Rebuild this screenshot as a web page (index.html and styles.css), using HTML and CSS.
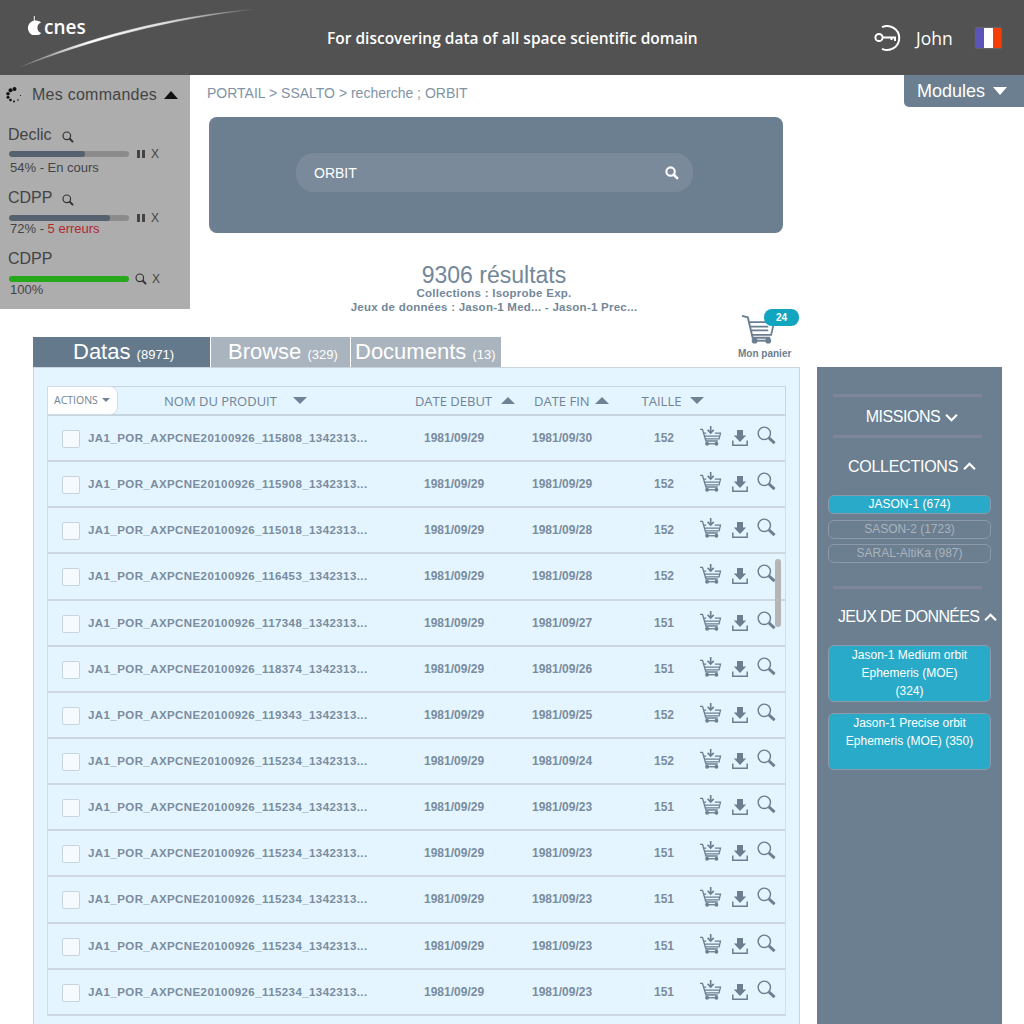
FILE: index.html
```html
<!DOCTYPE html>
<html lang="fr">
<head>
<meta charset="utf-8">
<title>CNES - Recherche ORBIT</title>
<link rel="stylesheet" href="styles.css">
</head>
<body>
<svg class="defs" width="0" height="0" aria-hidden="true">
  <symbol id="i-cart" viewBox="0 0 24 22">
    <path d="M1 3.500h2.600l3.600 12.200h12.400" fill="none" stroke="currentColor" stroke-width="1.400"/>
    <path d="M5 7.500h2.500M16.500 7.500h6L21 13.500H6.800M6 10.500h15" fill="none" stroke="currentColor" stroke-width="1.300"/>
    <path d="M12.200 0v6.500M9 4l3.200 3.300L15.400 4" fill="none" stroke="currentColor" stroke-width="1.700"/>
    <circle cx="8.400" cy="18.600" r="2"/><circle cx="18.200" cy="18.600" r="2"/>
    <path d="M8.400 18.600h9.800" stroke="currentColor" stroke-width="1.400"/>
  </symbol>
  <symbol id="i-dl" viewBox="0 0 16 16">
    <path d="M5 0h6v5.500h3.200L8 12 1.800 5.500H5z"/>
    <path d="M.8 10.500v4.700h14.400v-4.700" fill="none" stroke="currentColor" stroke-width="1.500"/>
  </symbol>
  <symbol id="i-search" viewBox="0 0 20 20">
    <circle cx="7.700" cy="7.700" r="6.500" fill="none" stroke="currentColor" stroke-width="1.500"/>
    <path d="M12.500 12.500l6 5.500" fill="none" stroke="currentColor" stroke-width="3"/>
  </symbol>
  <symbol id="i-search-mid" viewBox="0 0 20 20">
    <circle cx="8" cy="8" r="6.300" fill="none" stroke="currentColor" stroke-width="2"/>
    <path d="M12.500 12.500l6 6" fill="none" stroke="currentColor" stroke-width="3.200"/>
  </symbol>
  <symbol id="i-search-bold" viewBox="0 0 20 20">
    <circle cx="8" cy="8" r="6" fill="none" stroke="currentColor" stroke-width="3"/>
    <path d="M12.500 12.500l6 6" fill="none" stroke="currentColor" stroke-width="3.600"/>
  </symbol>
  <symbol id="i-pause" viewBox="0 0 8 8"><path d="M0 0h3v8H0zM5 0h3v8H5z"/></symbol>
</svg>

<header class="topbar">
  <div class="brand">
    <svg class="brand-mark" viewBox="0 0 18 20" aria-hidden="true">
      <path d="M7.200 0h1v6h-1z"/>
      <path d="M11 5A8 8 0 1 0 15 18 6.500 6.500 0 0 1 11 12 6 6 0 0 1 15 6.800 8 8 0 0 0 11 5z"/>
    </svg>
    <span class="brand-name">cnes</span>
  </div>
  <svg class="swoosh" viewBox="0 0 240 60" aria-hidden="true">
    <defs>
      <linearGradient id="sw" x1="0" x2="1" y1="0" y2="0">
        <stop offset="0" stop-color="#fff" stop-opacity="0"/>
        <stop offset=".3" stop-color="#fff"/>
        <stop offset=".6" stop-color="#fff" stop-opacity=".8"/>
        <stop offset="1" stop-color="#fff" stop-opacity="0"/>
      </linearGradient>
    </defs>
    <path d="M0 59C70 28 150 8 238 0 150 10 72 31 0 59z" fill="url(#sw)" stroke="url(#sw)" stroke-width=".6"/>
  </svg>
  <p class="tagline">For discovering data of all space scientific domain</p>
  <div class="user">
    <svg class="key" viewBox="0 0 28 28" aria-hidden="true">
      <path d="M8 3.200A12 12 0 1 1 8 24.800" fill="none" stroke="#fff" stroke-width="2"/>
      <circle cx="5" cy="13.500" r="3.600" fill="none" stroke="#fff" stroke-width="2"/>
      <path d="M8.500 13.500h12.500v3.500M17.500 13.500v2.500" fill="none" stroke="#fff" stroke-width="2"/>
    </svg>
    <span class="user-name">John</span>
    <span class="flag"><i class="flag-b"></i><i class="flag-w"></i><i class="flag-r"></i></span>
  </div>
</header>

<div class="upper">
  <aside class="orders">
    <div class="orders-head">
      <svg class="spinner" viewBox="0 0 16 16" aria-hidden="true">
        <circle cx="8.500" cy="2" r="2"/><circle cx="4.500" cy="3.200" r="2"/><circle cx="2" cy="6.800" r="1.800"/>
        <circle cx="2" cy="10.300" r="1.500"/><circle cx="4.500" cy="13" r="1.300"/><circle cx="8" cy="14.600" r="1"/>
        <circle cx="12" cy="13" r=".8"/><circle cx="14.500" cy="8.500" r=".6"/>
      </svg>
      <span class="orders-title">Mes commandes</span>
      <i class="tri tri-up tri-dark"></i>
    </div>
    <div class="order order-a">
      <div class="order-name">Declic <svg class="mini"><use href="#i-search-mid"/></svg></div>
      <div class="order-bar">
        <div class="bar"><div class="fill" style="width:63%"></div></div>
        <svg class="pause"><use href="#i-pause"/></svg><span class="x">X</span>
      </div>
      <div class="order-status">54% - En cours</div>
    </div>
    <div class="order order-b">
      <div class="order-name">CDPP <svg class="mini"><use href="#i-search-mid"/></svg></div>
      <div class="order-bar">
        <div class="bar"><div class="fill" style="width:84%"></div></div>
        <svg class="pause"><use href="#i-pause"/></svg><span class="x">X</span>
      </div>
      <div class="order-status">72% - <span class="err">5 erreurs</span></div>
    </div>
    <div class="order order-c">
      <div class="order-name">CDPP</div>
      <div class="order-bar">
        <div class="bar"><div class="fill fill-ok" style="width:100%"></div></div>
        <svg class="mini mini-bar"><use href="#i-search-mid"/></svg><span class="x">X</span>
      </div>
      <div class="order-status">100%</div>
    </div>
  </aside>

  <main class="intro">
    <div class="crumbs-row">
      <div class="crumbs">PORTAIL &gt; SSALTO &gt; recherche ; ORBIT</div>
      <button class="modules">Modules <i class="tri tri-down tri-white"></i></button>
    </div>
    <section class="search-card">
      <div class="search-box">
        <span>ORBIT</span>
        <svg class="search-icon"><use href="#i-search-bold"/></svg>
      </div>
    </section>
    <section class="results">
      <h1>9306 résultats</h1>
      <p>Collections : Isoprobe Exp.</p>
      <p>Jeux de données : Jason-1 Med... - Jason-1 Prec...</p>
      <div class="basket">
        <svg class="basket-icon" viewBox="0 0 36 32" aria-hidden="true">
          <path d="M1 1.500l6 1.500 5 21h18" fill="none" stroke="currentColor" stroke-width="2"/>
          <path d="M8 8h26l-3 13H11M10 12.500h18M11 16.500h17" fill="none" stroke="currentColor" stroke-width="1.800"/>
          <circle cx="14" cy="27" r="3"/><circle cx="28" cy="27" r="3"/><path d="M14 27h14" stroke="currentColor" stroke-width="2"/>
        </svg>
        <span class="basket-count">24</span>
        <span class="basket-label">Mon panier</span>
      </div>
    </section>
  </main>
</div>

<div class="lower">
  <section class="data">
    <nav class="tabs">
      <a class="tab tab-on">Datas <small>(8971)</small></a>
      <a class="tab tab-browse">Browse <small>(329)</small></a>
      <a class="tab tab-docs">Documents <small>(13)</small></a>
    </nav>
    <div class="panel">
      <div class="table">
        <div class="thead">
          <button class="actions">ACTIONS <i class="tri tri-down tri-small"></i></button>
          <span class="th th-name">NOM DU PRODUIT <i class="tri tri-down tri-col"></i></span>
          <span class="th th-start">DATE DEBUT <i class="tri tri-up tri-col"></i></span>
          <span class="th th-end">DATE FIN <i class="tri tri-up tri-col"></i></span>
          <span class="th th-size">TAILLE <i class="tri tri-down tri-col"></i></span>
        </div>
        <div class="row"><i class="check"></i><span class="name">JA1_POR_AXPCNE20100926_115808_1342313...</span><span class="date">1981/09/29</span><span class="date">1981/09/30</span><span class="size">152</span><span class="tools"><svg class="t-cart"><use href="#i-cart"/></svg><svg class="t-dl"><use href="#i-dl"/></svg><svg class="t-s"><use href="#i-search"/></svg></span></div>
        <div class="row"><i class="check"></i><span class="name">JA1_POR_AXPCNE20100926_115908_1342313...</span><span class="date">1981/09/29</span><span class="date">1981/09/29</span><span class="size">152</span><span class="tools"><svg class="t-cart"><use href="#i-cart"/></svg><svg class="t-dl"><use href="#i-dl"/></svg><svg class="t-s"><use href="#i-search"/></svg></span></div>
        <div class="row"><i class="check"></i><span class="name">JA1_POR_AXPCNE20100926_115018_1342313...</span><span class="date">1981/09/29</span><span class="date">1981/09/28</span><span class="size">152</span><span class="tools"><svg class="t-cart"><use href="#i-cart"/></svg><svg class="t-dl"><use href="#i-dl"/></svg><svg class="t-s"><use href="#i-search"/></svg></span></div>
        <div class="row"><i class="check"></i><span class="name">JA1_POR_AXPCNE20100926_116453_1342313...</span><span class="date">1981/09/29</span><span class="date">1981/09/28</span><span class="size">152</span><span class="tools"><svg class="t-cart"><use href="#i-cart"/></svg><svg class="t-dl"><use href="#i-dl"/></svg><svg class="t-s"><use href="#i-search"/></svg></span></div>
        <div class="row"><i class="check"></i><span class="name">JA1_POR_AXPCNE20100926_117348_1342313...</span><span class="date">1981/09/29</span><span class="date">1981/09/27</span><span class="size">151</span><span class="tools"><svg class="t-cart"><use href="#i-cart"/></svg><svg class="t-dl"><use href="#i-dl"/></svg><svg class="t-s"><use href="#i-search"/></svg></span></div>
        <div class="row"><i class="check"></i><span class="name">JA1_POR_AXPCNE20100926_118374_1342313...</span><span class="date">1981/09/29</span><span class="date">1981/09/26</span><span class="size">151</span><span class="tools"><svg class="t-cart"><use href="#i-cart"/></svg><svg class="t-dl"><use href="#i-dl"/></svg><svg class="t-s"><use href="#i-search"/></svg></span></div>
        <div class="row"><i class="check"></i><span class="name">JA1_POR_AXPCNE20100926_119343_1342313...</span><span class="date">1981/09/29</span><span class="date">1981/09/25</span><span class="size">152</span><span class="tools"><svg class="t-cart"><use href="#i-cart"/></svg><svg class="t-dl"><use href="#i-dl"/></svg><svg class="t-s"><use href="#i-search"/></svg></span></div>
        <div class="row"><i class="check"></i><span class="name">JA1_POR_AXPCNE20100926_115234_1342313...</span><span class="date">1981/09/29</span><span class="date">1981/09/24</span><span class="size">152</span><span class="tools"><svg class="t-cart"><use href="#i-cart"/></svg><svg class="t-dl"><use href="#i-dl"/></svg><svg class="t-s"><use href="#i-search"/></svg></span></div>
        <div class="row"><i class="check"></i><span class="name">JA1_POR_AXPCNE20100926_115234_1342313...</span><span class="date">1981/09/29</span><span class="date">1981/09/23</span><span class="size">151</span><span class="tools"><svg class="t-cart"><use href="#i-cart"/></svg><svg class="t-dl"><use href="#i-dl"/></svg><svg class="t-s"><use href="#i-search"/></svg></span></div>
        <div class="row"><i class="check"></i><span class="name">JA1_POR_AXPCNE20100926_115234_1342313...</span><span class="date">1981/09/29</span><span class="date">1981/09/23</span><span class="size">151</span><span class="tools"><svg class="t-cart"><use href="#i-cart"/></svg><svg class="t-dl"><use href="#i-dl"/></svg><svg class="t-s"><use href="#i-search"/></svg></span></div>
        <div class="row"><i class="check"></i><span class="name">JA1_POR_AXPCNE20100926_115234_1342313...</span><span class="date">1981/09/29</span><span class="date">1981/09/23</span><span class="size">151</span><span class="tools"><svg class="t-cart"><use href="#i-cart"/></svg><svg class="t-dl"><use href="#i-dl"/></svg><svg class="t-s"><use href="#i-search"/></svg></span></div>
        <div class="row"><i class="check"></i><span class="name">JA1_POR_AXPCNE20100926_115234_1342313...</span><span class="date">1981/09/29</span><span class="date">1981/09/23</span><span class="size">151</span><span class="tools"><svg class="t-cart"><use href="#i-cart"/></svg><svg class="t-dl"><use href="#i-dl"/></svg><svg class="t-s"><use href="#i-search"/></svg></span></div>
        <div class="row"><i class="check"></i><span class="name">JA1_POR_AXPCNE20100926_115234_1342313...</span><span class="date">1981/09/29</span><span class="date">1981/09/23</span><span class="size">151</span><span class="tools"><svg class="t-cart"><use href="#i-cart"/></svg><svg class="t-dl"><use href="#i-dl"/></svg><svg class="t-s"><use href="#i-search"/></svg></span></div>
        <div class="scrollbar"></div>
      </div>
    </div>
  </section>

  <aside class="filters">
    <hr class="rule rule-first">
    <h2 class="filter-title filter-missions">MISSIONS <svg class="chev" viewBox="0 0 12 8"><path d="M1 1.500l5 5 5-5"/></svg></h2>
    <hr class="rule rule-second">
    <h2 class="filter-title filter-coll">COLLECTIONS <svg class="chev" viewBox="0 0 12 8"><path d="M1 6.500l5-5 5 5"/></svg></h2>
    <div class="pills">
      <span class="pill pill-on">JASON-1 (674)</span>
      <span class="pill">SASON-2 (1723)</span>
      <span class="pill">SARAL-AltiKa (987)</span>
    </div>
    <hr class="rule rule-third">
    <h2 class="filter-title filter-sets">JEUX DE DONNÉES <svg class="chev" viewBox="0 0 12 8"><path d="M1 6.500l5-5 5 5"/></svg></h2>
    <div class="sets">
      <span class="set">Jason-1 Medium orbit<br>Ephemeris (MOE)<br>(324)</span>
      <span class="set">Jason-1 Precise orbit<br>Ephemeris (MOE) (350)</span>
    </div>
  </aside>
</div>
</body>
</html>
```
FILE: styles.css
```css
* { box-sizing: border-box; }
html, body { margin: 0; padding: 0; }
body {
  width: 1024px;
  height: 1024px;
  overflow: hidden;
  background: #fff;
  font-family: "Liberation Sans", Arial, sans-serif;
  color: #6b7f90;
}
.defs { position: absolute; }
svg { fill: currentColor; display: block; }
.tri { display: inline-block; width: 0; height: 0; border-style: solid; border-color: transparent; }
.tri-up { border-width: 0 7px 8px; border-bottom-color: currentColor; }
.tri-down { border-width: 8px 7px 0; border-top-color: currentColor; }

/* Header */
.topbar {
  position: relative;
  height: 75px;
  background: #525252;
  display: flex;
  align-items: center;
  color: #fff;
}
.brand { display: flex; align-items: center; margin: -21px 0 0 27px; width: 61px; height: 22px; flex: none; }
.brand-mark { width: 17px; height: 19px; flex: none; color: #fff; margin-top: -3px; }
.brand-name { font-family: "Open Sans", sans-serif; font-size: 19px; font-weight: 600; line-height: 20px; margin-left: 0; }
.swoosh { position: absolute; left: 18px; top: 9px; width: 240px; height: 60px; }
.tagline {
  margin: 0 0 0 239px;
  width: 370px;
  font-family: "Open Sans", sans-serif;
  font-size: 15.500px;
  font-weight: 600;
  text-align: center;
  white-space: nowrap;
}
.user { display: flex; align-items: center; margin-left: 177px; }
.key { width: 28px; height: 28px; flex: none; }
.user-name { font-family: "Open Sans", sans-serif; font-size: 17.500px; margin-left: 14px; width: 59px; }
.flag { display: flex; width: 25px; height: 20px; box-shadow: 0 0 2px #888; margin-left: 1px; }
.flag i { flex: 1; }
.flag-b { background: #5d54b8; }
.flag-w { background: #fff; }
.flag-r { background: #f53d0a; }

.upper { display: flex; height: 262px; align-items: flex-start; }

/* Orders */
.orders {
  width: 190px;
  height: 234px;
  flex: none;
  background: #adadad;
  color: #444;
  padding: 10px 0 0 8px;
}
.orders-head { display: flex; align-items: center; height: 19px; }
.spinner { width: 16px; height: 16px; color: #111; margin-left: -2px; }
.orders-title { font-size: 16px; margin-left: 10px; letter-spacing: .25px; }
.tri-dark { color: #111; margin-left: 7px; }
.order-a { margin-top: 21px; }
.order-b { margin-top: 12px; }
.order-c { margin-top: 12px; }
.order-name { display: flex; align-items: center; font-size: 16px; line-height: 20px; height: 20px; }
.mini { width: 12px; height: 12px; margin-left: 10px; color: #333; margin-top: 3px; }
.mini-bar { margin: 0 0 0 6px; }
.order-bar { display: flex; align-items: center; height: 12px; margin-top: 3px; margin-left: 1px; }
.order-b .order-bar, .order-c .order-bar { margin-top: 4px; }
.order-b .order-status, .order-c .order-status { margin-top: -3px; }
.bar { width: 120px; height: 6px; border-radius: 3px; background: #8b8b8b; overflow: hidden; flex: none; }
.fill { height: 100%; background: #55616f; border-radius: 3px; }
.fill-ok { background: #25a81c; }
.pause { width: 8px; height: 8px; margin-left: 8px; color: #444; }
.x { font-size: 12px; margin-left: 6px; }
.order-c .x { margin-left: 5px; }
.order-status { font-size: 13px; line-height: 16px; margin: 0 0 0 2px; color: #444; }
.err { color: #b02a2e; }

/* Intro */
.intro { flex: 1; min-width: 0; height: 262px; }
.crumbs-row { display: flex; justify-content: space-between; align-items: flex-start; padding-left: 17px; height: 42px; }
.crumbs { font-size: 14px; color: #8193a5; margin-top: 10px; }
.modules {
  width: 120px;
  height: 32px;
  border: 0;
  border-radius: 0 0 0 5px;
  background: #6b7f90;
  color: #fff;
  font: 18px "Liberation Sans", Arial, sans-serif;
  display: flex;
  align-items: center;
  padding: 0 0 0 13px;
  gap: 8px;
}
.tri-white { color: #fff; }
.search-card {
  margin-left: 19px;
  width: 574px;
  height: 116px;
  background: #6b7f90;
  border-radius: 8px;
  border-left: 3px solid #737e93;
  padding: 36px 0 0 84px;
}
.search-box {
  width: 397px;
  height: 39px;
  border-radius: 18px;
  background: #7a8a9a;
  color: #fff;
  font-size: 14px;
  display: flex;
  justify-content: space-between;
  align-items: center;
  padding: 0 14px 0 18px;
}
.search-icon { width: 14px; height: 14px; color: #fff; }
.results { position: relative; text-align: center; width: 570px; margin: 31px 0 0 19px; }
.results h1 { margin: 0; font-size: 23px; font-weight: 400; line-height: 22px; color: #73879a; }
.results p { margin: 0; font-size: 11.500px; font-weight: 700; line-height: 14px; color: #73879a; letter-spacing: .25px; }
.basket { position: absolute; left: 532px; top: 45px; width: 60px; height: 52px; }
.basket-icon { width: 35px; height: 32px; color: #6b7f90; margin-top: 5px; }
.basket-count {
  position: absolute;
  left: 23px;
  top: 0;
  width: 35px;
  height: 17px;
  border-radius: 8px;
  background: #12a5bf;
  color: #fff;
  font-size: 10px;
  font-weight: 700;
  line-height: 17px;
  text-align: center;
}
.basket-label { display: block; margin: 2px 0 0 -3px; font-size: 10px; font-weight: 700; color: #6b7f90; white-space: nowrap; text-align: left; }

/* Lower */
.lower { display: flex; align-items: flex-start; padding-left: 33px; }
.data { width: 767px; flex: none; }
.tabs { display: flex; height: 30px; gap: 1px; }
.tab { color: #fff; font-size: 22px; line-height: 30px; white-space: nowrap; background: #aab4be; }
.tab small { font-size: 13px; }
.tab-on { width: 177px; background: #647a8c; padding-left: 40px; }
.tab-browse { width: 139px; padding-left: 17px; }
.tab-docs { width: 150px; padding-left: 4px; }
.panel { height: 700px; background: #e4f5ff; border: 1px solid #c8d4de; padding: 18px 13px 0; }
.table { position: relative; width: 739px; }
.thead { display: flex; align-items: center; height: 30px; border: 1px solid #c8d4de; border-width: 1px 1px 2px 0; font-family: "Open Sans", sans-serif; font-size: 13px; color: #6f8396; }
.actions {
  width: 71px;
  height: 29px;
  flex: none;
  margin-top: -1px;
  border: 1px solid #d3dce3;
  border-radius: 0 8px 8px 0;
  background: #fff;
  color: #6f8396;
  font: 10.500px "Open Sans", sans-serif;
  padding: 0 0 0 6px;
  display: flex;
  align-items: center;
  gap: 4px;
  white-space: nowrap;
}
.tri-small { border-width: 4px 4px 0; }
.th { display: flex; align-items: center; white-space: nowrap; }
.tri-col { border-width: 7px 7px 0; margin-left: 9px; }
.tri-col.tri-up { border-width: 0 7px 7px; }
.th-name { margin-left: 46px; }
.tri-col { margin-left: 16px; }
.th-start { margin-left: 108px; }
.th-start .tri-col { margin-left: 9px; }
.th-end { margin-left: 19px; }
.th-end .tri-col { margin-left: 5px; }
.th-size { margin-left: 33px; }
.th-size .tri-col { margin-left: 9px; }
.row {
  display: grid;
  grid-template-columns: 26px 336px 108px 122px 45px 1fr;
  align-items: center;
  height: 46.150px;
  border-left: 1px solid #d2dde5;
  border-right: 1px solid #d2dde5;
  border-bottom: 2px solid #ccd7e0;
  padding-left: 14px;
  color: #7a8c9e;
  font-size: 12px;
  font-weight: 700;
}
.check { display: block; width: 18px; height: 18px; background: #f4fafd; border: 1px solid #c9d4dd; border-radius: 2px; margin-top: 2px; }
.name { font-size: 11.500px; letter-spacing: .42px; white-space: nowrap; }
.date { text-align: left; }
.size { text-align: left; }
.tools { display: flex; align-items: flex-start; margin-top: -3px; }
.t-cart { width: 23px; height: 21px; color: #6b7f90; flex: none; }
.t-dl { width: 16px; height: 16px; margin: 4px 0 0 10px; color: #6b7f90; flex: none; }
.t-s { width: 19px; height: 19px; margin: 0 0 0 9px; color: #6b7f90; flex: none; }
.scrollbar { position: absolute; left: 728px; top: 173px; width: 6px; height: 68px; border-radius: 3px; background: #b5b5b5; }

/* Filters */
.filters {
  width: 185px;
  height: 700px;
  margin-top: 30px;
  margin-left: 17px;
  flex: none;
  background: #6b7f90;
  border-left: 2px solid #6f7a8e;
  color: #fff;
}
.rule { border: 0; height: 3px; width: 149px; background: #7d8799; margin: 0 0 0 14px; }
.rule-first { margin-top: 27px; }
.rule-second { margin-top: 0; }
.rule-third { margin-top: 23px; }
.filter-title { margin: 0; font-size: 16px; font-weight: 400; display: flex; justify-content: center; align-items: center; gap: 5px; white-space: nowrap; }
.filter-missions { height: 38px; padding: 2px 0 0 3px; letter-spacing: -.45px; }
.filter-coll { height: 57px; letter-spacing: -.25px; padding-left: 3px; }
.filter-sets { height: 56px; justify-content: flex-start; padding-left: 19px; letter-spacing: -.65px; }
.chev { width: 13px; height: 9px; fill: none; stroke: #fff; stroke-width: 2; flex: none; }
.pills { display: flex; flex-direction: column; gap: 5px; padding-left: 9px; }
.pill {
  width: 163px;
  height: 19px;
  border: 1px solid #8c9aaa;
  border-radius: 6px;
  font-size: 12px;
  line-height: 17px;
  text-align: center;
  color: #a9b3bd;
}
.pill-on { background: #2aaac9; color: #fff; margin-bottom: 1px; }
.sets { display: flex; flex-direction: column; gap: 11px; padding-left: 9px; }
.set {
  width: 163px;
  height: 57px;
  padding: 0 4px;
  border: 1px solid #8c9aaa;
  border-radius: 6px;
  background: #2aaac9;
  color: #fff;
  font-size: 12px;
  line-height: 18px;
  text-align: center;
}
```
